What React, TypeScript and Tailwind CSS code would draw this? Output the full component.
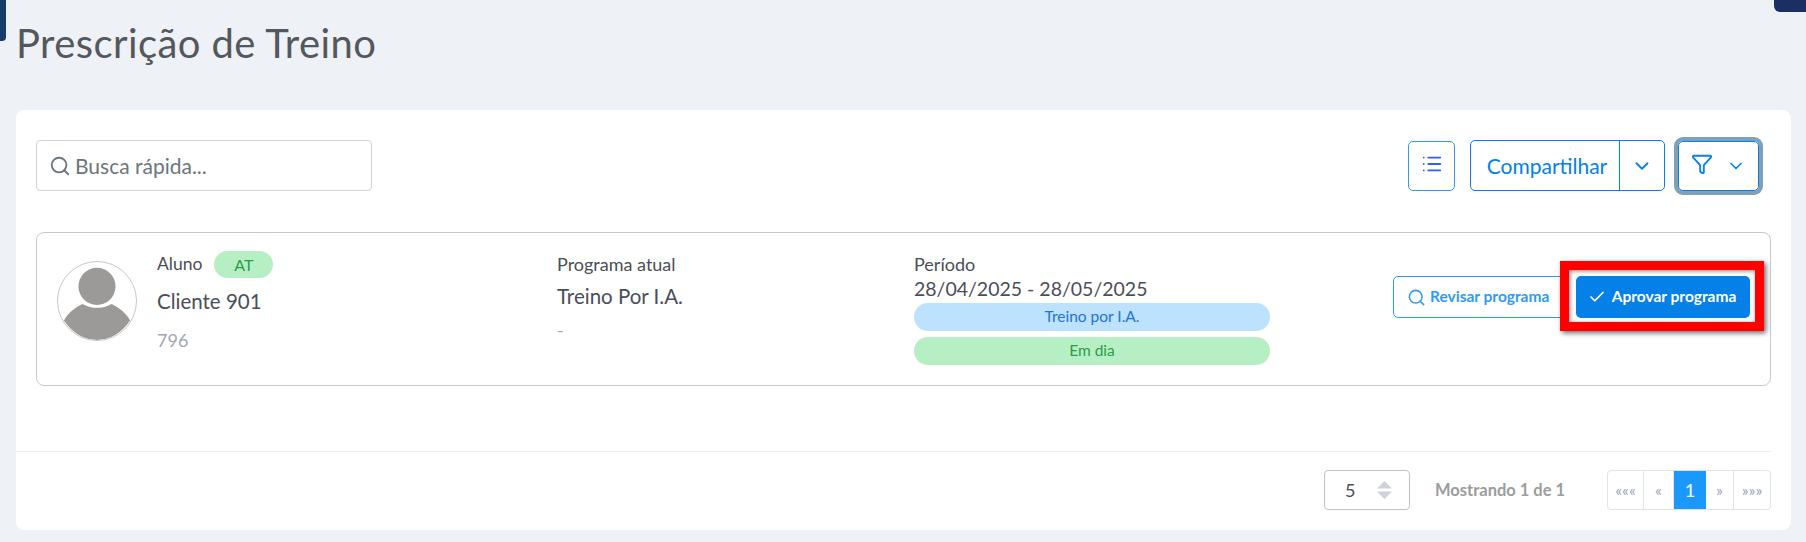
import React from 'react';
import { Search, List, ChevronDown, Funnel, Check } from 'lucide-react';

const Avatar = () => (
  <div className="w-20 h-20 rounded-full border border-[#c8c8c8] overflow-hidden shrink-0">
    <svg viewBox="0 0 80 80" className="w-full h-full">
      <circle cx="40" cy="25" r="19" fill="#9b9a99" />
      <path d="M25 43 Q40 51 55 43 Q68 49 74 60 Q60 80 40 80 Q20 80 6 60 Q12 49 25 43 Z" fill="#9b9a99" />
    </svg>
  </div>
);

const pagerCell = 'flex items-center justify-center h-full border-r border-[#e0e3e9] text-[#98a2b8] text-[16px]';

export default function App() {
  return (
    <div className="relative h-[542px] overflow-hidden bg-[#eef1f6] font-['Lato','Open_Sans',sans-serif]">
      <div className="absolute left-0 top-0 w-[6px] h-[41px] rounded-br-[4px] bg-[#163e66]" />
      <div className="absolute right-0 top-0 w-[32px] h-[12px] rounded-bl-[6px] bg-[#1c2f63]" />

      <h1 className="pl-[16px] pt-[18px] h-[110px] text-[40px] leading-[50px] text-[#54575c] tracking-[0.4px]">Prescrição de Treino</h1>

      <div className="ml-4 w-[1775px] h-[420px] bg-white rounded-[8px] flex flex-col">
        <div className="flex items-center justify-between pl-5 pr-[32px] pt-[30px]">
          <div className="w-[336px] h-[51px] flex items-center gap-[4px] pl-[12px] border border-[#cfd4dc] rounded-[4px] text-[#6c757d] text-[21px]">
            <Search className="w-[22px] h-[22px]" strokeWidth={2} />
            <span>Busca rápida...</span>
          </div>
          <div className="flex items-center">
            <button className="w-[47px] h-[50px] flex items-center justify-center border border-[#2f9bf0] rounded-[5px] text-[#2f5cff]">
              <List className="w-[22px] h-[22px] -mt-[4px]" strokeWidth={2} />
            </button>
            <div className="ml-[15px] w-[195px] h-[51px] flex border border-[#0480e6] rounded-[5px] text-[#0480e6]">
              <div className="w-[149px] flex items-center justify-center pl-[4px] border-r border-[#0480e6] text-[21px]">Compartilhar</div>
              <div className="flex-1 flex items-center justify-center"><ChevronDown className="w-[22px] h-[22px]" strokeWidth={2} /></div>
            </div>
            <button className="ml-[13px] w-[81px] h-[50px] flex items-center justify-center gap-[13px] border border-[#0480e6] rounded-[5px] ring-4 ring-[#7ea0b8] text-[#0480e6]">
              <Funnel className="w-[22px] h-[22px] -mt-[3px]" strokeWidth={2} />
              <ChevronDown className="w-[20px] h-[20px]" strokeWidth={2} />
            </button>
          </div>
        </div>

        <div className="mt-[41px] mx-5 h-[154px] flex items-start border border-[#c9c9c9] rounded-[8px] pl-5 text-[#4a4e57]">
          <div className="mt-[28px]"><Avatar /></div>
          <div className="ml-[20px] w-[400px] pt-[18px]">
            <div className="flex items-center gap-[12px] h-[27px] text-[17.5px]">
              <span>Aluno</span>
              <span className="w-[59px] h-[27px] rounded-full bg-[#b7efc5] text-[#2a9d4a] text-[16px] flex items-center justify-center">AT</span>
            </div>
            <div className="mt-[9px] text-[20.5px] leading-[28px]">Cliente 901</div>
            <div className="mt-[14px] text-[18px] leading-[22px] text-[#a3a7ae]">796</div>
          </div>
          <div className="w-[357px] pt-[20px]">
            <div className="text-[18px] leading-[22px]">Programa atual</div>
            <div className="mt-[7px] text-[20.5px] leading-[28px]">Treino Por I.A.</div>
            <div className="mt-[9px] text-[18px] leading-[22px] text-[#a3a7ae]">-</div>
          </div>
          <div className="w-[356px] pt-[20px]">
            <div className="text-[18px] leading-[22px]">Período</div>
            <div className="mt-[1px] text-[19.5px] leading-[25px]">28/04/2025 - 28/05/2025</div>
            <div className="mt-[2px] h-[28px] rounded-full bg-[#bde2fd] text-[#1f74d1] text-[15.5px] flex items-center justify-center">Treino por I.A.</div>
            <div className="mt-[6px] h-[28px] rounded-full bg-[#b7efc5] text-[#2a9d4a] text-[15.5px] flex items-center justify-center">Em dia</div>
          </div>
          <div className="ml-[123px] mt-[43px] flex gap-2">
            <button className="w-[175px] h-[42px] flex items-center gap-[4px] pl-[13px] border border-[#2f9bf0] rounded-[5px] text-[#2f9bf0] text-[15.5px] font-bold">
              <Search className="w-[19px] h-[19px]" strokeWidth={2} />
              Revisar programa
            </button>
            <div className="relative">
              <button className="w-[174px] h-[42px] flex items-center justify-center gap-[6px] pr-[2px] rounded-[5px] bg-[#0480e6] text-white text-[15.5px] font-bold">
                <Check className="w-[18px] h-[18px]" strokeWidth={2.25} />
                Aprovar programa
              </button>
              <div className="absolute -left-[16px] -right-[14px] -top-[15px] -bottom-[13px] border-[9px] border-[#ff0000] shadow-[2px_2px_5px_rgba(0,0,0,0.6),inset_1px_1px_4px_rgba(0,0,0,0.5)]" />
            </div>
          </div>
        </div>

        <div className="mt-[65px] mr-5 h-px bg-[#eceef2]" />

        <div className="mt-[18px] mr-5 flex items-center justify-end">
          <div className="w-[86px] h-[40px] flex items-center justify-between pl-5 pr-[17px] border border-[#c0c1c7] rounded-[4px] text-[#4a4e57] text-[18px]">
            <span>5</span>
            <svg viewBox="0 0 15 18" className="w-[15px] h-[18px]">
              <path d="M7.5 0 L15 7.5 H0 Z M0 10.5 H15 L7.5 18 Z" fill="#cfd2dc" />
            </svg>
          </div>
          <span className="ml-[25px] w-[172px] text-[16.5px] font-bold text-[#9c9c9c]">Mostrando 1 de 1</span>
          <div className="w-[164px] h-[40px] flex border border-[#e0e3e9] rounded-[4px] overflow-hidden">
            <div className={`${pagerCell} w-[36px]`}>«««</div>
            <div className={`${pagerCell} w-[30px]`}>«</div>
            <div className="w-[32px] h-full flex items-center justify-center bg-[#1a98fb] text-white text-[18px]">1</div>
            <div className={`${pagerCell} w-[28px]`}>»</div>
            <div className="flex-1 h-full flex items-center justify-center text-[#98a2b8] text-[16px]">»»»</div>
          </div>
        </div>
      </div>
    </div>
  );
}
